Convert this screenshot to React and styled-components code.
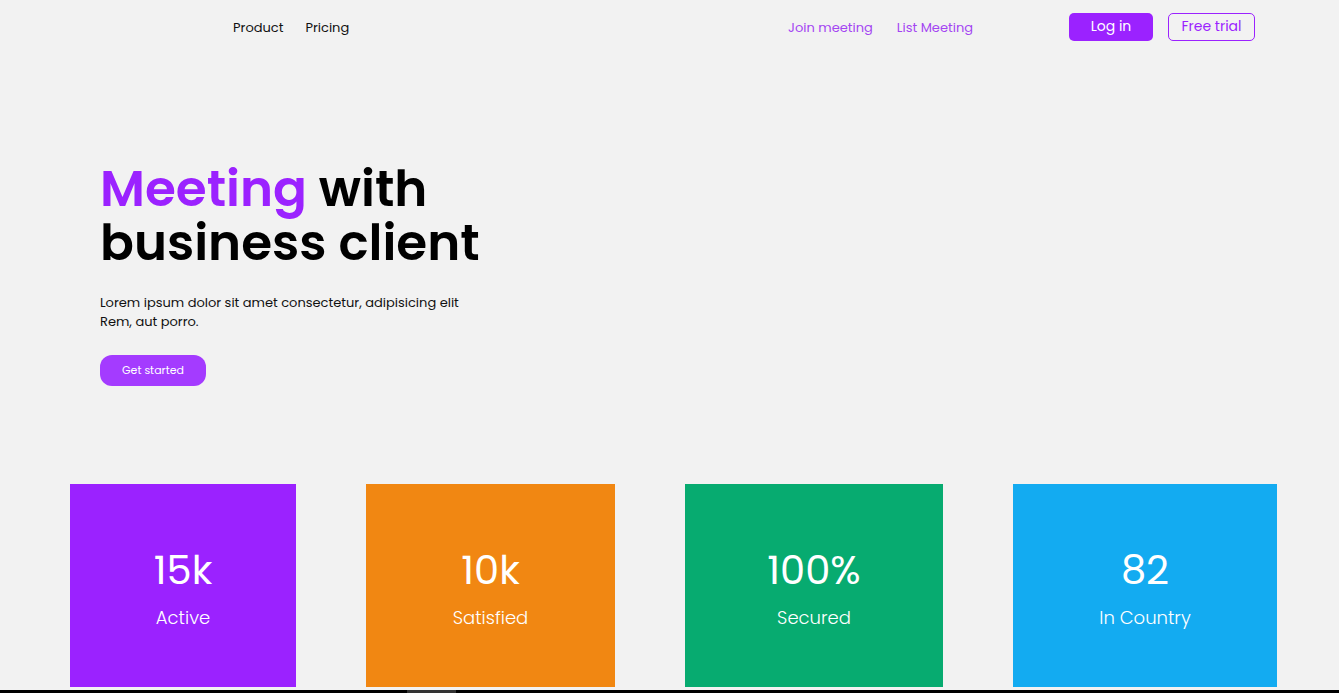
import React from "react";
import styled, { createGlobalStyle } from "styled-components";

const GlobalStyle = createGlobalStyle`
  html, body {
    margin: 0;
    padding: 0;
    background-color: #f2f2f2;
    font-family: "Poppins", "Open Sans", "Liberation Sans", sans-serif;
    overflow: hidden;
  }
`;

const stats = [
  { value: "15k", label: "Active", color: "#9b22ff", width: 226 },
  { value: "10k", label: "Satisfied", color: "#f18712", width: 249 },
  { value: "100%", label: "Secured", color: "#07ab70", width: 258 },
  { value: "82", label: "In Country", color: "#13abf1", width: 264 }
];

const App = () => {
  return (
    <>
      <GlobalStyle />
      <Page>
        <Nav>
          <NavLinks>
            <NavLink>Product</NavLink>
            <NavLink>Pricing</NavLink>
          </NavLinks>
          <NavLinks right>
            <NavLink accent>Join meeting</NavLink>
            <NavLink accent>List Meeting</NavLink>
          </NavLinks>
          <NavButtons>
            <LoginBtn>Log in</LoginBtn>
            <TrialBtn>Free trial</TrialBtn>
          </NavButtons>
        </Nav>

        <Hero>
          <Title>
            <Accent>Meeting</Accent> with
            <br />
            business client
          </Title>
          <Lead>
            Lorem ipsum dolor sit amet consectetur, adipisicing elit
            <br />
            Rem, aut porro.
          </Lead>
          <StartBtn>Get started</StartBtn>
        </Hero>

        <Stats>
          {stats.map(s => (
            <StatCard key={s.label} bg={s.color} w={s.width}>
              <StatValue>{s.value}</StatValue>
              <StatLabel>{s.label}</StatLabel>
            </StatCard>
          ))}
        </Stats>
      </Page>
      <ScrollBar>
        <ScrollThumb />
      </ScrollBar>
    </>
  );
};

const Page = styled.div`
  width: 1339px;
  height: 693px;
  display: flex;
  flex-direction: column;
`;

const Nav = styled.nav`
  height: 55px;
  display: flex;
  align-items: center;
  padding: 0 84px 0 233px;
`;

const NavLinks = styled.div`
  display: flex;
  gap: ${props => (props.right ? "24px" : "22px")};
  margin-left: ${props => (props.right ? "auto" : "0")};
`;

const NavLink = styled.a`
  font-size: 13px;
  color: ${props => (props.accent ? "#a445f2" : "#111")};
  cursor: pointer;
`;

const NavButtons = styled.div`
  display: flex;
  gap: 15px;
  margin: -2px 0 0 96px;
`;

const LoginBtn = styled.button`
  width: 84px;
  height: 28px;
  border: none;
  border-radius: 5px;
  background-color: #9b22ff;
  color: #fff;
  font-family: inherit;
  font-size: 14px;
  cursor: pointer;
`;

const TrialBtn = styled.button`
  width: 87px;
  height: 28px;
  border: 1px solid #9b22ff;
  border-radius: 5px;
  background-color: transparent;
  color: #9b22ff;
  font-family: inherit;
  font-size: 14px;
  cursor: pointer;
`;

const Hero = styled.section`
  padding: 107px 0 0 100px;
  height: 325px;
  box-sizing: border-box;
`;

const Title = styled.h1`
  margin: 0;
  font-size: 50px;
  line-height: 54px;
  font-weight: 600;
  color: #000;
`;

const Accent = styled.span`
  color: #9b22ff;
`;

const Lead = styled.p`
  margin: 23px 0 0;
  font-size: 13px;
  line-height: 19px;
  color: #111;
`;

const StartBtn = styled.button`
  margin-top: 24px;
  width: 106px;
  height: 31px;
  border: none;
  border-radius: 12px;
  background-color: #a43bff;
  color: #fff;
  font-family: inherit;
  font-size: 11px;
  cursor: pointer;
`;

const Stats = styled.div`
  margin-top: 104px;
  display: flex;
  gap: 70px;
  padding: 0 62px 0 70px;
`;

const StatCard = styled.div`
  flex: 0 0 ${props => props.w}px;
  height: 203px;
  background-color: ${props => props.bg};
  color: #fff;
  display: flex;
  flex-direction: column;
  align-items: center;
  justify-content: center;
`;

const StatValue = styled.div`
  font-size: 40px;
  line-height: 48px;
  margin-top: 4px;
`;

const StatLabel = styled.div`
  font-size: 18px;
  font-weight: 300;
  line-height: 24px;
  margin-top: 12px;
`;

const ScrollBar = styled.div`
  position: fixed;
  left: 0;
  right: 0;
  bottom: 0;
  height: 3px;
  background-color: #000;
`;

const ScrollThumb = styled.div`
  position: absolute;
  left: 407px;
  width: 49px;
  top: 0;
  bottom: 0;
  background-color: #333;
`;

export default App;
